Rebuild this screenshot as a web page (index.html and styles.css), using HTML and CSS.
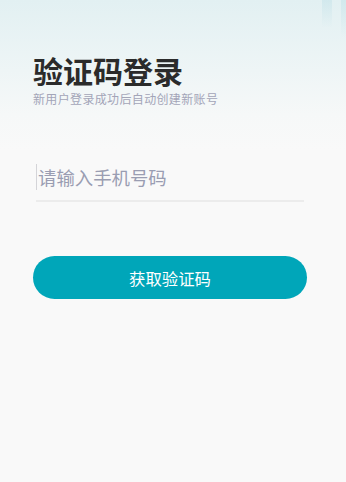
FILE: index.html
```html
<!DOCTYPE html>
<html lang="zh">
<head>
<meta charset="utf-8">
<link rel="stylesheet" href="styles.css">
</head>
<body>
<div class="page">
  <div class="deco deco-a"></div>
  <div class="deco deco-b"></div>
  <div class="content">
    <h1 class="title">验证码登录</h1>
    <p class="subtitle">新用户登录成功后自动创建新账号</p>
    <div class="field">
      <span class="caret"></span>
      <span class="placeholder">请输入手机号码</span>
    </div>
    <button class="btn">获取验证码</button>
  </div>
</div>
</body>
</html>
```

FILE: styles.css
```css
html, body {
  margin: 0;
  padding: 0;
  height: 100%;
}
body {
  font-family: "Noto Sans CJK SC", "Noto Sans", sans-serif;
  background: #f9f9f9;
}
.page {
  position: relative;
  min-height: 482px;
  background: linear-gradient(180deg, #e2f0f2 0px, #eef5f6 70px, #f6f8f8 115px, #f9f9f9 150px);
  overflow: hidden;
}
.deco {
  position: absolute;
  top: 0;
  background: linear-gradient(180deg, rgba(200,228,234,0.6), rgba(215,236,240,0));
}
.deco-a {
  left: 322px;
  width: 10px;
  height: 28px;
}
.deco-b {
  left: 341px;
  width: 5px;
  height: 38px;
}
.content {
  padding: 50px 39px 0 33px;
  display: flex;
  flex-direction: column;
}
.title {
  margin: 0;
  font-size: 30px;
  line-height: 41px;
  font-weight: 700;
  color: #2b2b2b;
}
.subtitle {
  margin: 0;
  font-size: 12px;
  letter-spacing: 0.35px;
  line-height: 16px;
  color: #a3a5b8;
}
.field {
  margin: 49px 3px 0 3px;
  height: 46px;
  display: flex;
  align-items: center;
  border-bottom: 2px solid #ececec;
  box-sizing: border-box;
  padding-bottom: 3px;
}
.caret {
  width: 1px;
  height: 26px;
  background: #d4d4d8;
  margin-right: 1px;
}
.placeholder {
  font-size: 18.4px;
  color: #9a9db2;
  line-height: 24px;
}
.btn {
  margin-top: 54px;
  height: 43px;
  border: none;
  border-radius: 22px;
  background: #00a6b9;
  color: #ffffff;
  font-family: "Noto Sans CJK SC", sans-serif;
  font-size: 16.4px;
  padding: 0;
}
```
